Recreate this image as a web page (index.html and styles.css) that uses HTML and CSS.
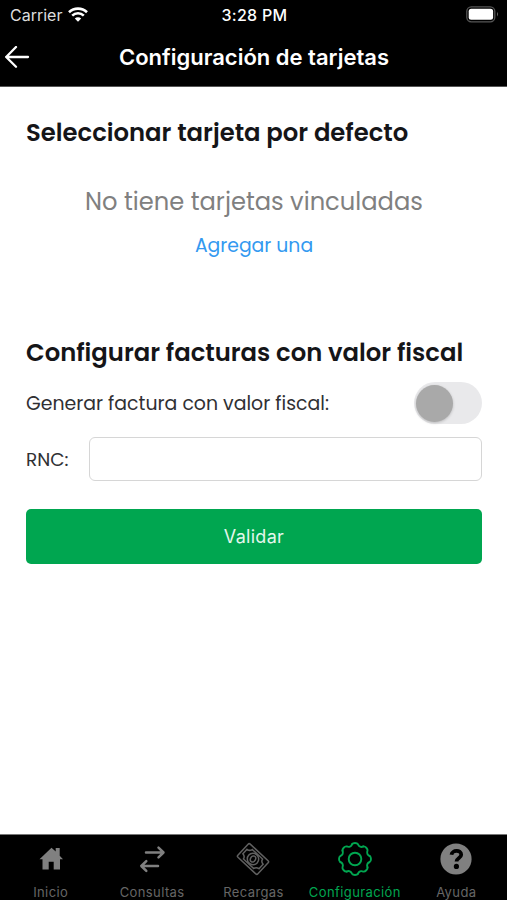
FILE: index.html
```html
<!DOCTYPE html>
<html lang="es">
<head>
  <meta charset="UTF-8">
  <title>Configuración de tarjetas</title>
  <meta name="viewport" content="width=device-width, initial-scale=1.0">
  <link rel="stylesheet" href="styles.css">
</head>
<body>
  <div class="status">
    <div class="carrier">
      <span>Carrier</span>
      <svg width="20" height="15" viewBox="0 0 20 15" fill="none" stroke="#fff" stroke-width="2.6">
        <path d="M1 5.2a13 13 0 0 1 18 0M4.2 8.6a8.4 8.4 0 0 1 11.6 0"/>
        <path d="M10 14.7l-3.2-3.2a4.6 4.6 0 0 1 6.4 0z" fill="#fff" stroke="none"/>
      </svg>
    </div>
    <span class="clock">3:28 PM</span>
    <svg class="battery" width="33" height="17" viewBox="0 0 33 17">
      <rect x=".8" y=".8" width="28" height="15" rx="4.5" fill="none" stroke="#555" stroke-width="1.3"/>
      <rect x="2.7" y="2.8" width="24.4" height="11" rx="2.5" fill="#fff"/>
      <path d="M31 6q2 2.2 0 4.5z" fill="#666"/>
    </svg>
  </div>

  <header class="nav">
    <svg width="25" height="22" viewBox="0 0 25 22" fill="none" stroke="#fff" stroke-width="2.3" stroke-linecap="round" stroke-linejoin="round">
      <path d="M11 1L1.2 11l9.800 9.700M1.200 11H23"/>
    </svg>
    <h1>Configuración de tarjetas</h1>
  </header>

  <main>
    <h2>Seleccionar tarjeta por defecto</h2>
    <p class="empty">No tiene tarjetas vinculadas</p>
    <a class="add">Agregar una</a>

    <h2>Configurar facturas con valor fiscal</h2>
    <div class="row">
      <span>Generar factura con valor fiscal:</span>
      <div class="switch"><div class="knob"></div></div>
    </div>
    <div class="field">
      <label for="rnc">RNC:</label>
      <input type="text" id="rnc">
    </div>
    <button>Validar</button>
  </main>

  <footer class="tabs">
    <div class="tab">
      <svg width="34" height="34" viewBox="0 0 34 34" fill="#808080">
        <path d="M17.500 5.700L5.500 17.300h3v10.200h6.200v-7.800h5v7.800h6.300V17.300h3l-3.300-3.600V6h-4v3.600z"/>
      </svg>
      <span>Inicio</span>
    </div>
    <div class="tab">
      <svg width="34" height="34" viewBox="0 0 34 34" fill="none" stroke="#808080" stroke-width="2.5" stroke-linecap="round" stroke-linejoin="round">
        <path d="M11 10.500h17M23.500 5.700l5 4.800-5 4.800M23 24H6.500M11.300 19.200l-5 4.800 5 4.800"/>
      </svg>
      <span>Consultas</span>
    </div>
    <div class="tab">
      <svg width="34" height="34" viewBox="-17 -17 34 34" fill="none" stroke="#606060" stroke-width="1.5">
        <g transform="rotate(43)">
          <rect x="-13.700" y="-9" width="27.400" height="18" rx="1.500"/>
          <path d="M-7-6.500H7Q7.500-3.500 11-3V3Q7.500 3.500 7 6.500H-7Q-7.500 3.500-11 3V-3Q-7.500-3.500-7-6.500z"/>
          <circle r="5.700"/>
          <ellipse rx="2.500" ry="3.200" transform="rotate(-15)"/>
        </g>
      </svg>
      <span>Recargas</span>
    </div>
    <div class="tab active">
      <svg width="34" height="34" viewBox="-17 -17 34 34" fill="none" stroke="#00a650" stroke-width="1.9" stroke-linecap="round" stroke-linejoin="round">
        <defs><path id="tooth" d="M-3-14.700C-2-16.400 2-16.400 3-14.700C4-12.300 6-11.500 8.270-12.510"/></defs>
        <use href="#tooth"/>
        <use href="#tooth" transform="rotate(45)"/>
        <use href="#tooth" transform="rotate(90)"/>
        <use href="#tooth" transform="rotate(135)"/>
        <use href="#tooth" transform="rotate(180)"/>
        <use href="#tooth" transform="rotate(225)"/>
        <use href="#tooth" transform="rotate(270)"/>
        <use href="#tooth" transform="rotate(315)"/>
        <circle r="6.300"/>
      </svg>
      <span>Configuración</span>
    </div>
    <div class="tab">
      <svg width="34" height="34" viewBox="-17 -17 34 34" fill="none">
        <circle r="15.600" fill="#808080"/>
        <path d="M-4.500-4.200C-4-9.200 5.200-9.600 5.200-4.200C5.200-1 .5-1 .5 2.600" stroke="#000" stroke-width="3.800"/>
        <circle cx=".4" cy="7.400" r="2.600" fill="#000"/>
      </svg>
      <span>Ayuda</span>
    </div>
  </footer>
</body>
</html>
```
FILE: styles.css
```css
* { box-sizing: border-box; margin: 0; padding: 0; }
body {
  height: 900px;
  display: flex; flex-direction: column;
  font-family: Poppins, Inter, sans-serif;
  background: #fff;
  color: #151518;
  overflow: hidden;
}
span, h1, h2, p { white-space: nowrap; }
.status {
  height: 29px;
  padding: 0 8px 0 10px;
  display: grid;
  grid-template-columns: 1fr auto 1fr;
  align-items: center;
  background: #000;
  color: #fff;
  font-family: Inter, sans-serif;
  font-size: 16px;
}
.carrier { display: flex; align-items: center; gap: 6px; color: #ddd; }
.clock { font-weight: 500; letter-spacing: 0.3px; }
.battery { justify-self: end; }
.nav {
  height: 58px;
  padding: 0 4px 1px 5px;
  display: grid;
  grid-template-columns: 25px 1fr 25px;
  align-items: center;
  background: #000;
  color: #fff;
  border-bottom: 1px solid #555;
  font-family: Inter, sans-serif;
}
h1 { font-size: 22px; font-weight: 600; text-align: center; }
main {
  flex: 1;
  padding: 28px 25px 0 26px;
  display: flex; flex-direction: column;
}
h2 { font-size: 24.3px; line-height: 36px; font-weight: 600; }
.empty {
  margin-top: 32px;
  font-size: 24.2px; line-height: 38px;
  color: #808080;
  text-align: center;
}
.add {
  margin: 10px 0 74px;
  font-size: 18.8px; line-height: 30px;
  color: #3399f0;
  text-align: center;
}
.row {
  margin-top: 11px;
  display: flex; justify-content: space-between; align-items: center;
  font-size: 18.9px;
  color: #303033;
}
.switch {
  width: 68px; height: 42px;
  padding: 3px 2px;
  border-radius: 21px;
  background: #e9e9eb;
}
.knob {
  width: 37px; height: 37px;
  border-radius: 50%;
  background: #a9a9a9;
  box-shadow: 0 1px 3px rgba(0,0,0,0.2);
}
.field {
  margin-top: 13px;
  display: flex; align-items: center; justify-content: space-between;
  font-size: 18.5px;
  color: #303033;
}
input {
  width: 393px; height: 44px;
  border: 1px solid #d6d6d6;
  border-radius: 6px;
  background: #fff;
}
button {
  margin-top: 28px;
  height: 55px;
  border: none;
  border-radius: 5px;
  background: #00a650;
  color: #e4f7ec;
  font-family: Inter, sans-serif;
  font-size: 18px;
  letter-spacing: 0.3px;
}
.tabs {
  height: 66px;
  padding-top: 7px;
  display: grid;
  grid-template-columns: repeat(5, 1fr);
  background: #000;
  border-top: 1px solid #777;
  color: #666;
  font-family: Inter, sans-serif;
  font-size: 13px;
}
.tab {
  display: flex; flex-direction: column; align-items: center;
  gap: 8px;
}
.tab span { line-height: 17px; letter-spacing: 0.4px; }
.active { color: #00a650; }
```
